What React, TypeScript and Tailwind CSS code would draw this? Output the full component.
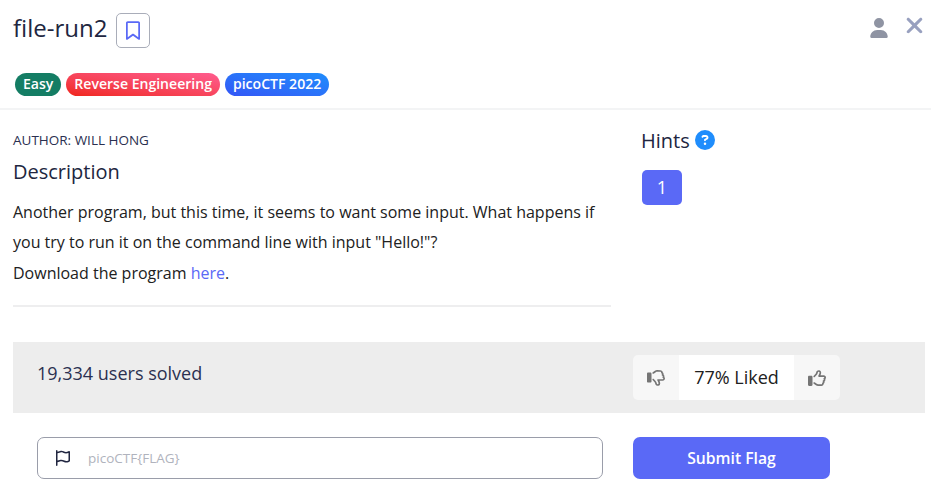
import React from "react";
import {
  FaCircleQuestion,
  FaRegBookmark,
  FaRegFlag,
  FaRegThumbsDown,
  FaRegThumbsUp,
  FaUser,
  FaXmark,
} from "react-icons/fa6";

const tags = [
  { label: "Easy", style: "bg-[#147d64]" },
  { label: "Reverse Engineering", style: "bg-linear-to-tr from-[#f02416] to-[#ff5c8f]" },
  { label: "picoCTF 2022", style: "bg-linear-to-tr from-[#3355f6] to-[#1f8dfc]" },
];

function Header() {
  return (
    <header className="h-[110px] border-b-2 border-[#f3f4f5] pr-[7px] pl-[13px]">
      <div className="flex h-[61px] items-start justify-between">
        <div className="flex">
          <h1 className="mt-[10px] text-[24px] leading-9 text-[#212640]">file-run2</h1>
          <button
            aria-label="Bookmark"
            className="mt-[13px] ml-[9px] flex h-[35px] w-[34px] items-center justify-center rounded-[5px] border border-[#a9adb9] text-[#5a69f6]"
          >
            <FaRegBookmark className="h-[19px] w-[14px]" />
          </button>
        </div>
        <div className="flex">
          <FaUser className="mt-[18px] h-[20px] w-[18px] text-[#8f94a3]" />
          <FaXmark className="mt-[13px] -mr-[3px] ml-[14px] size-[25px] text-[#98a0bf]" />
        </div>
      </div>
      <div className="ml-[2px] flex gap-[5px] pt-[12px]">
        {tags.map((t) => (
          <span
            key={t.label}
            className={`${t.style} h-[23px] rounded-full px-[8px] text-[14.05px] leading-[22px] font-semibold text-white`}
          >
            {t.label}
          </span>
        ))}
      </div>
    </header>
  );
}

function Body() {
  return (
    <main className="flex pl-[13px]">
      <section className="h-[197px] w-[598px] border-b-2 border-[#eeeeef]">
        <p className="pt-[20px] text-[13.5px] leading-5 text-[#2b3050]">AUTHOR: WILL HONG</p>
        <h2 className="mt-[8px] text-[20px] leading-7 text-[#212640]">Description</h2>
        <div className="mt-[11px] text-[16px] leading-[30.4px] text-[#212121]">
          <p>
            Another program, but this time, it seems to want some input. What happens if
            <br />
            you try to run it on the command line with input &quot;Hello!&quot;?
          </p>
          <p>
            Download the program <a className="text-[#5a69f6]">here</a>.
          </p>
        </div>
      </section>
      <section className="ml-[30px]">
        <h2 className="mt-[17px] flex items-center gap-[5px] text-[20px] leading-7 text-[#212640]">
          Hints
          <FaCircleQuestion className="mb-[2px] size-[20px] text-[#1f8dfc]" />
        </h2>
        <button className="mt-[15px] ml-px block h-[35px] w-[40px] rounded-[5px] bg-[#5a69f6] text-[18px] text-white">
          1
        </button>
      </section>
    </main>
  );
}

function Solves() {
  return (
    <section className="mt-[35px] mr-[6px] ml-[13px] flex h-[71px] bg-[#ededed] pl-6">
      <p className="w-[596px] pt-[17px] text-[18px] leading-7 text-[#2b3050]">19,334 users solved</p>
      <div className="mt-[13px] flex h-[45px] w-[207px] shrink-0 overflow-hidden rounded-[5px] bg-[#f7f7f7] text-[#757575]">
        <div className="flex w-[46px] items-center justify-center">
          <FaRegThumbsDown className="size-[18px]" />
        </div>
        <div className="w-[115px] bg-white text-center text-[18px] leading-[45px] text-[#212121]">77% Liked</div>
        <div className="flex w-[46px] items-center justify-center">
          <FaRegThumbsUp className="size-[18px]" />
        </div>
      </div>
    </section>
  );
}

function FlagForm() {
  return (
    <form className="mt-6 flex pl-[37px]">
      <label className="flex h-[42px] w-[566px] items-center rounded-[7px] border border-[#9a9daa] pl-[17px] text-[#212640]">
        <FaRegFlag className="size-[16px]" />
        <input
          placeholder="picoCTF{FLAG}"
          className="mb-px ml-[17px] h-[21px] w-[400px] text-[13.5px] outline-none placeholder:text-[#b0b3bd]"
        />
      </label>
      <button
        type="button"
        className="ml-[30px] h-[42px] w-[197px] rounded-[7px] bg-[#5a69f6] pt-[2px] text-[15.7px] font-semibold text-white"
      >
        Submit Flag
      </button>
    </form>
  );
}

export default function App() {
  return (
    <div className="h-[492px] w-[931px] overflow-hidden bg-white font-['Open_Sans','Noto_Sans',sans-serif]">
      <Header />
      <Body />
      <Solves />
      <FlagForm />
    </div>
  );
}
